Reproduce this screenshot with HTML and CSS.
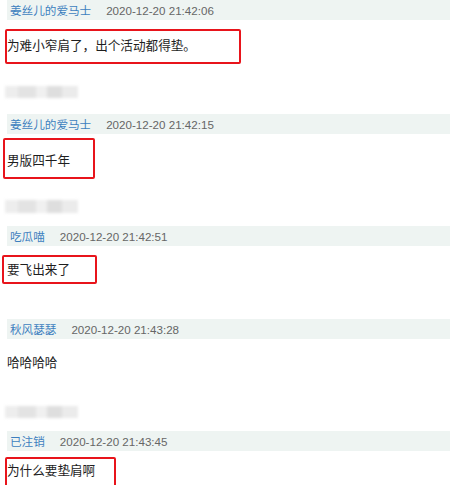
FILE: index.html
```html
<!DOCTYPE html>
<html>
<head>
    <meta charset="utf-8">
    <title>评论</title>
    <link rel="stylesheet" href="styles.css">
</head>
<body>
    <div class="comments">
        <div class="bar"><span class="name">姜丝儿的爱马士</span><span class="time">2020-12-20 21:42:06</span></div>
        <div class="text mark mark-1">为难小窄肩了，出个活动都得垫。</div>
        <div class="blur blur-1"></div>

        <div class="bar bar-2"><span class="name">姜丝儿的爱马士</span><span class="time">2020-12-20 21:42:15</span></div>
        <div class="text mark mark-2">男版四千年</div>
        <div class="blur blur-2"></div>

        <div class="bar bar-3"><span class="name">吃瓜喵</span><span class="time">2020-12-20 21:42:51</span></div>
        <div class="text mark mark-3">要飞出来了</div>

        <div class="bar bar-4"><span class="name">秋风瑟瑟</span><span class="time">2020-12-20 21:43:28</span></div>
        <div class="text plain">哈哈哈哈</div>
        <div class="blur blur-4"></div>

        <div class="bar bar-5"><span class="name">已注销</span><span class="time">2020-12-20 21:43:45</span></div>
        <div class="text mark mark-5">为什么要垫肩啊</div>
    </div>
</body>
</html>
```

FILE: styles.css
```css
body {
    margin: 0;
    background: #fff;
    font-family: "Liberation Sans", "Noto Sans CJK SC", sans-serif;
    overflow: hidden;
}

.comments {
    display: flex;
    flex-direction: column;
    align-items: flex-start;
}

.bar {
    align-self: stretch;
    margin-left: 7px;
    height: 20px;
    padding-left: 3px;
    background: #eef4f2;
    display: flex;
    align-items: center;
    gap: 15px;
    font-size: 11.6px;
}

.name {
    color: #3d7fbf;
}

.time {
    color: #666;
}

.text {
    font-size: 12.6px;
    line-height: 18px;
    color: #1e1e1e;
    white-space: nowrap;
}

.mark {
    border: 2px solid #e8141b;
    border-radius: 2px;
    box-sizing: border-box;
}

.mark-1 {
    margin: 9px 0 0 5px;
    width: 236px;
    height: 35px;
    padding: 6px 0 0 0;
}

.mark-2 {
    margin: 4px 0 0 3px;
    width: 92px;
    height: 41px;
    padding: 12px 0 0 2px;
}

.mark-3 {
    margin: 9px 0 0 2px;
    width: 95px;
    height: 29px;
    padding: 4px 0 0 3px;
}

.mark-5 {
    margin: 6px 0 0 5px;
    width: 111px;
    height: 32px;
    padding: 3px 0 0 0;
}

.plain {
    margin: 15px 0 0 7px;
}

.blur {
    margin-left: 5px;
    width: 73px;
    height: 12px;
    background: linear-gradient(90deg, #ededed 0 18%, #e3e3e3 18% 42%, #f0f0f0 42% 58%, #dedede 58% 78%, #ebebeb 78%);
    filter: blur(1.5px);
}

.blur-1 { margin-top: 22px; }
.bar-2 { margin-top: 16px; }
.blur-2 { margin-top: 21px; height: 13px; }
.bar-3 { margin-top: 13px; }
.bar-4 { margin-top: 35px; }
.blur-4 { margin-top: 34px; }
.bar-5 { margin-top: 13px; }
```
